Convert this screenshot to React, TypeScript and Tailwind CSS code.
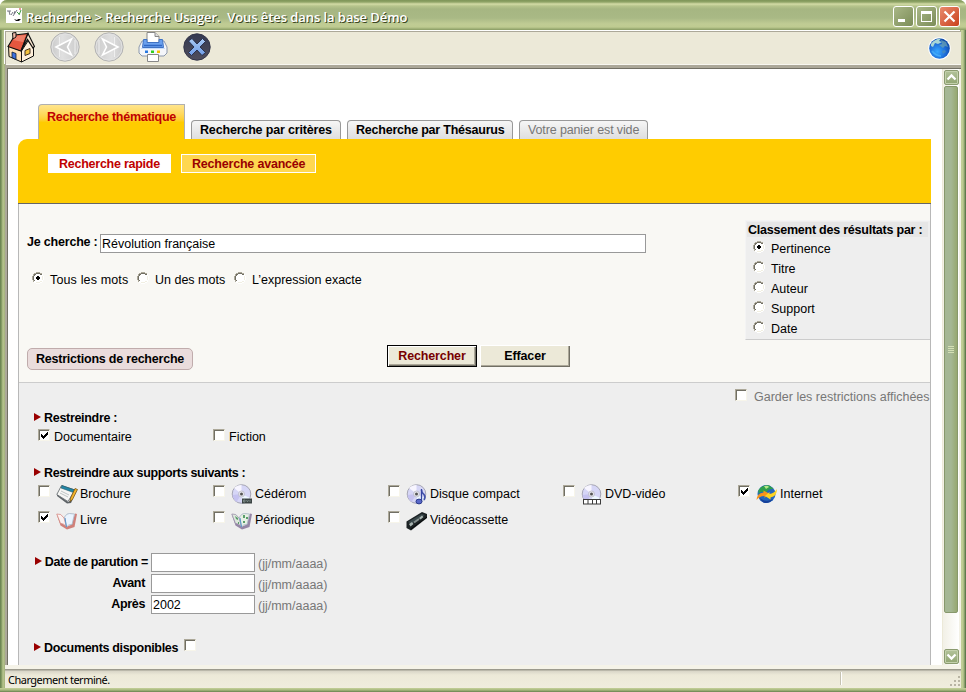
import React from "react";

const BASE = "block h-[15px] text-[12.5px] leading-[16px] whitespace-nowrap";

function Label({ className = "", children }: { className?: string; children: React.ReactNode }) {
  return <span className={`${BASE} shrink-0 ${className}`}>{children}</span>;
}

function Radio({ checked = false }: { checked?: boolean }) {
  return (
    <svg width="12" height="12" viewBox="0 0 12 12" className="block shrink-0" shapeRendering="crispEdges">
      <path d="M4 1h4v1h2v2h1v4h-1v2h-2v1H4v-1H2V8H1V4h1V2h2z" fill="#fff" />
      <path d="M4 0h4v1H4zM2 1h2v1H2zM8 1h2v1H8zM1 2h1v2H1zM0 4h1v4H0zM1 8h1v2H1z" fill="#aca899" />
      <path d="M4 1h4v1H4zM2 2h2v1H2zM8 2h2v1H8zM2 3h1v1H2zM1 4h1v4H1zM2 8h1v1H2z" fill="#716f64" />
      <path d="M4 11h4v1H4zM8 10h2v1H8zM2 10h2v1H2zM10 8h1v2h-1zM11 4h1v4h-1zM10 2h1v2h-1z" fill="#fff" />
      <path d="M4 10h4v1H4zM8 9h2v1H8zM10 4h1v4h-1z" fill="#f1efe2" />
      {checked && <path d="M5 4h2v1h1v2h-1v1h-2v-1h-1v-2h1z" fill="#000" />}
    </svg>
  );
}

function Check({ checked = false }: { checked?: boolean }) {
  return (
    <span className="block size-3 shrink-0 border border-t-[#aca899] border-r-[#f7f5ea] border-b-[#f7f5ea] border-l-[#aca899] bg-white">
      <span className="block size-[10px] border-t border-l border-[#716f64]">
        {checked && (
          <svg width="9" height="9" viewBox="0 0 9 9" className="block" shapeRendering="crispEdges">
            <path d="M1 3h1v1h1v1h1v-1h1v-1h1v-1h1v-1h1v3h-1v1h-1v1h-1v1h-1v1h-1v-1h-1v-1h-1z" fill="#000" />
          </svg>
        )}
      </span>
    </span>
  );
}

function Arrow() {
  return (
    <svg width="7" height="8" viewBox="0 0 7 8" className="block shrink-0">
      <path d="M0 0l7 4-7 4z" fill="#900" />
    </svg>
  );
}

function AppIcon() {
  return (
    <svg width="16" height="15" viewBox="0 0 16 15" className="block shrink-0">
      <path d="M0 0h16v15H0z" fill="#fff" />
      <path d="M1 3h4M3 3l1 4M5 7l2-3M7 8l4-6M9 3l-1 3" stroke="#667" fill="none" strokeWidth=".9" />
      <path d="M11 4l2 2M13 7l2-5" stroke="#3a9a40" fill="none" />
      <path d="M13 1h2" stroke="#c33" />
      <path d="M8 11l3 1 1-1h3l-2 2h-3z" fill="#111" />
    </svg>
  );
}

function House() {
  return (
    <svg width="28" height="31" viewBox="0 0 28 31" className="block shrink-0">
      <path d="M1.500 14L14.500 19V30L2 24.500z" fill="#ffe0b4" stroke="#111" />
      <path d="M14.500 19L21 9 26.500 15V24L14.500 30z" fill="#fff0da" stroke="#111" />
      <path d="M1 14.500L8 3 21 1.500 14 19z" fill="#e4573f" stroke="#111" strokeWidth="1.2" />
      <path d="M8 4L19 3 16 10 6 8z" fill="#f0806a" />
      <path d="M21 1.500L27.500 14.500 26 16 20.500 7.500 14 19z" fill="#fbe6cf" stroke="#111" strokeWidth="1.200" />
      <path d="M5.500 1L9 .5V5L6 7z" fill="#f1bca8" stroke="#111" />
      <path d="M5 20l4 1.500V27.500L5 25.500z" fill="#3f70e0" stroke="#123" strokeWidth=".8" />
      <path d="M18 18.500l5-2v5l-5 2z" fill="#f6c33c" stroke="#432" />
    </svg>
  );
}

function NavDisc({ flip = false }: { flip?: boolean }) {
  return (
    <svg width="30" height="30" viewBox="0 0 30 30" className={flip ? "block shrink-0 -scale-x-100" : "block shrink-0"}>
      <defs>
        <linearGradient id={flip ? "discB" : "discA"} x1="0" x2="1">
          <stop offset="0" stopColor="#c9c9c9" />
          <stop offset=".4" stopColor="#e0e0e0" />
          <stop offset="1" stopColor="#cbcbcb" />
        </linearGradient>
      </defs>
      <circle cx="15" cy="15" r="14.2" fill={flip ? "url(#discB)" : "url(#discA)"} stroke="#b3b3b3" />
      <circle cx="15" cy="15" r="13" fill="none" stroke="#e2e2e2" />
      <path d="M9.500 5v20M25 8v14" stroke="#efefef" />
      <path d="M21.500 7L6 15 21.500 23 17.500 15z" fill="#cfcfcf" stroke="#fff" strokeWidth="1.6" />
    </svg>
  );
}

function Printer() {
  return (
    <svg width="30" height="30" viewBox="0 0 30 30" className="block shrink-0">
      <path d="M4 9L1 15v6l3 3h22l3-3v-6l-3-6z" fill="#f4f6fa" stroke="#8c98ac" />
      <path d="M9 11V.5h8l4 4V11z" fill="#fff" stroke="#888" />
      <path d="M17 .5v4h4" fill="#ddd" stroke="#888" />
      <path d="M5.500 7.500h3.500v3h12v-3h3.500l1 8H4.500z" fill="#6aa0ee" stroke="#3f72c4" />
      <path d="M6 13.500h18" stroke="#2f66c4" strokeWidth="1.500" />
      <path d="M3 16.500h24" stroke="#c6dcfb" />
      <path d="M7 18.500h3v2.500H7z" fill="#2878e0" />
      <path d="M13 18.500h3v2.500h-3z" fill="#30d020" />
      <path d="M19 18.500h3v2.500h-3z" fill="#f5c000" />
      <path d="M9.500 22.500h11v7h-11z" fill="#fff" stroke="#888" />
    </svg>
  );
}

function CloseDisc() {
  return (
    <svg width="28" height="28" viewBox="0 0 28 28" className="block shrink-0">
      <defs>
        <linearGradient id="closeBg" x2="0" y2="1">
          <stop offset="0" stopColor="#343850" />
          <stop offset="1" stopColor="#504e5c" />
        </linearGradient>
        <linearGradient id="closeX" x2="0" y2="1">
          <stop offset="0" stopColor="#a9caf4" />
          <stop offset="1" stopColor="#6f9ce6" />
        </linearGradient>
      </defs>
      <circle cx="14" cy="14" r="13.200" fill="url(#closeBg)" stroke="#34364a" />
      <path d="M5.500 8L9 5.500l5 5.500 5.500-5.500 3 3-5.500 5.500 5.500 5.500-3.500 3-5-5.500-5.500 5.500-3-3 5.500-5.500z" fill="url(#closeX)" stroke="#222a48" strokeWidth=".9" />
    </svg>
  );
}

function Globe() {
  return (
    <svg width="23" height="23" viewBox="0 0 23 23" className="block shrink-0">
      <defs>
        <radialGradient id="globeG" cx=".4" cy=".65" r=".7">
          <stop offset="0" stopColor="#38a8ff" />
          <stop offset=".6" stopColor="#1b69d6" />
          <stop offset="1" stopColor="#0f459e" />
        </radialGradient>
      </defs>
      <circle cx="11.500" cy="11.500" r="11.200" fill="#fff" />
      <circle cx="11.500" cy="11.500" r="10.300" fill="url(#globeG)" />
      <path d="M3 7Q7 1.500 13 1.500l-2 2.500 3 1-4 2-3-1-2 4-2-1z" fill="#a7d5d6" />
      <path d="M13 3l5 2 2 5-3-1-2 2-4-3 3-1z" fill="#6fa5b0" opacity=".7" />
      <path d="M14 14l3-1 1 2-3 2z" fill="#4f8fb5" opacity=".7" />
      <path d="M4 14q4 5 9 5" stroke="#5cc8ff" fill="none" strokeWidth="2" opacity=".5" />
    </svg>
  );
}

function Disc({ kind }: { kind: "cd" | "audio" | "video" }) {
  return (
    <svg width="22" height="22" viewBox="0 0 22 22" className="block shrink-0">
      <circle cx="10.500" cy="10" r="9.300" fill="#d6d6f6" stroke="#a6a6b4" />
      <path d="M10.500 10L3 4Q6 1 10.500 1z" fill="#f7f5ff" />
      <path d="M10.500 10L19 14q-3 5-8 5z" fill="#edf7ff" />
      <path d="M10.500 10L1.500 11q1 5 4 7z" fill="#c5c2f0" />
      <circle cx="10.500" cy="10" r="3" fill="#e6e6ee" stroke="#b4b4c2" strokeWidth=".7" />
      <circle cx="10.500" cy="10" r="1.500" fill="#555" />
      {kind === "cd" && (
        <g>
          <path d="M11 14.500h10v5H11z" fill="#3c4444" />
          <path d="M12.500 16v2h1.500v-2zM15.500 16l1 2 1-2M19 16v2" stroke="#8fa09c" fill="none" strokeWidth=".7" />
        </g>
      )}
      {kind === "audio" && (
        <g>
          <path d="M15.500 6q0 3 2.500 4.500 2 2.500 0 5.500" fill="none" stroke="#4353ac" strokeWidth="1.600" />
          <path d="M15.500 5v12" stroke="#3444a0" strokeWidth="1.300" />
          <ellipse cx="13" cy="17.500" rx="3" ry="2.400" fill="#5867c8" stroke="#2c3b8d" />
        </g>
      )}
      {kind === "video" && (
        <g>
          <path d="M2 15h18v5.500H2z" fill="#3b3b3b" />
          <path d="M3 16h3.500v3.500H3zM7.500 16H11v3.500H7.500zM12 16h3v3.500h-3zM16 16h3v3.500h-3z" fill="#fff" />
        </g>
      )}
    </svg>
  );
}

function Brochure() {
  return (
    <svg width="22" height="22" viewBox="0 0 22 22" className="block shrink-0">
      <path d="M1 9.500L12 18l5-3-2 4-4 .5L1 12z" fill="#5d6266" />
      <path d="M5.500 1.500L19 6 12 17.500.8 10.500z" fill="#f6f6f4" stroke="#6b7276" strokeWidth=".9" />
      <path d="M6 1.500L19 6l-1.500 2.500L5 4z" fill="#2387a8" stroke="#205565" strokeWidth=".6" />
      <path d="M5 7l8 4M4 9l8 4" stroke="#b0b6b8" strokeWidth=".8" />
      <path d="M19 4.500l2.500 1-5 10-2.500 2 .5-3.500z" fill="#f4b42c" stroke="#65470f" strokeWidth=".7" />
    </svg>
  );
}

function Book({ periodical = false }: { periodical?: boolean }) {
  const edge = periodical ? "#9586a6" : "#d0807a";
  return (
    <svg width="22" height="22" viewBox="0 0 22 22" className="block shrink-0">
      <path d="M.5 4l4 11.500L11 19.500l7.500-2.500L21 4l-2-.5-3 11-5 2-5-3z" fill={edge} />
      <path d="M.8 4Q5 3 8 8l2.500 9Q8 13 4.500 13.500z" fill={periodical ? "#dde8dc" : "#fbf1f0"} stroke={edge} strokeWidth=".7" />
      <path d="M10.500 17L8.500 7Q11 3 13.500 3.500L18.500 4 16 14.500q-3.500-.5-5.500 2.500z" fill={periodical ? "#e7f0e4" : "#eaf4ff"} stroke="#9cabbc" strokeWidth=".7" />
      <path d="M9 8l1.500 9" stroke="#5a95cc" />
      {periodical && <path d="M4 6l3 2v2l-2-1zM12 5h2v3h-2zM15 7h2v2h-2zM12 11h2v2h-2zM7 12h1v2H7z" fill="#5a9e6a" />}
    </svg>
  );
}

function Cassette() {
  return (
    <svg width="22" height="22" viewBox="0 0 22 22" className="block shrink-0">
      <path d="M.5 11.500L16 2l5 2v4L5 20.500.5 18z" fill="#1c2224" />
      <path d="M2 12L15.500 4l3.500 1L5.500 14z" fill="#39474a" />
      <path d="M3 14l3-2 1.500 2-3 2.500zM13 8l3-2.500L17.500 7l-3 2.500z" fill="#a9b5b2" />
      <path d="M8 12.500l5-3.500" stroke="#86908f" strokeWidth="2" />
      <path d="M5 19L21 7" stroke="#080a0b" />
    </svg>
  );
}

function WebBall() {
  return (
    <svg width="22" height="22" viewBox="0 0 22 22" className="block shrink-0">
      <circle cx="10.500" cy="10" r="9" fill="#2466bc" />
      <path d="M2.500 6Q6 .8 13 1.300l4.500 3.500-5 1-3 3-4-1-3 2z" fill="#2f9f4c" />
      <path d="M8 2q4-1 5 1l-3 2z" fill="#b4e884" />
      <path d="M4 14q6 5 13 1-3 4.500-8 4-4-1-5-5z" fill="#16409a" />
      <path d="M.5 16Q1 9 7.500 8.500V6.500L13 9.500 8.500 14v-2Q4 12 .5 16z" fill="#f8941b" />
      <path d="M21 5q0 7.500-6.500 8.500v2L9 12l4.500-4v2Q18 9.500 21 5z" fill="#fdd321" />
    </svg>
  );
}

function WinButton({ kind }: { kind: "min" | "max" | "close" }) {
  const bg = kind === "close" ? "bg-linear-to-br from-[#e88a6c] to-[#c93f18]" : "bg-linear-to-br from-[#a9b787] to-[#7c8d58]";
  return (
    <span className={`block size-[21px] shrink-0 rounded-[3px] border border-white ${bg}`}>
      <svg width="19" height="19" viewBox="0 0 19 19" className="block">
        {kind === "min" && <path d="M4 12h7v3H4z" fill="#fff" />}
        {kind === "max" && <path d="M4 4h11v11H4zM5 7v7h9V7z" fill="#fff" fillRule="evenodd" />}
        {kind === "close" && <path d="M4.500 4.500l10 10M14.500 4.500l-10 10" stroke="#fff" strokeWidth="2.200" />}
      </svg>
    </span>
  );
}

function ScrollButton({ down = false }: { down?: boolean }) {
  return (
    <span className="block h-[15px] w-[15px] shrink-0 rounded-[2px] border border-[#8b9b70] bg-linear-to-b from-[#b3c39a] to-[#91a572] shadow-[inset_0_0_0_1px_#c4d1ad]">
      <svg width="13" height="13" viewBox="0 0 13 13" className={down ? "block rotate-180" : "block"}>
        <path d="M2.500 8.500l4-4 4 4" fill="none" stroke="#fff" strokeWidth="2.300" />
      </svg>
    </span>
  );
}

function Tab({ className, children }: { className: string; children: React.ReactNode }) {
  return (
    <div className={`h-[19px] shrink-0 rounded-t-[4px] border border-b-0 border-[#999] bg-linear-to-b from-[#f6f6f6] to-[#dedede] pt-px pl-2 ${className}`}>
      {children}
    </div>
  );
}

function Item({ checked = false, icon, label }: { checked?: boolean; icon?: React.ReactNode; label: string }) {
  return (
    <div className="flex w-[175px] shrink-0 items-start">
      <Check checked={checked} />
      {icon ? <span className="-mt-px ml-1.5 h-[22px] w-6 shrink-0">{icon}</span> : <span className="w-1 shrink-0" />}
      <Label className={icon ? "mt-px" : ""}>{label}</Label>
    </div>
  );
}

function DateRow({ label, value = "", arrow = false }: { label: string; value?: string; arrow?: boolean }) {
  return (
    <div className="mb-0.5 flex h-[19px] items-start">
      <div className={`mt-px flex w-[132px] items-start justify-end ${arrow ? "pr-[3px]" : "pr-1.5"}`}>
        {arrow && <span className="mt-[3px] mr-[3px]"><Arrow /></span>}
        <Label className="font-bold tracking-[-0.34px]">{label}</Label>
      </div>
      <div className="h-[19px] w-[104px] border border-[#999] bg-white pt-px pl-px"><Label>{value}</Label></div>
      <Label className="mt-[3px] ml-[3px] text-[#777]">(jj/mm/aaaa)</Label>
    </div>
  );
}

function Toolbar() {
  return (
    <div className="flex h-[34px] shrink-0 items-start border-t border-l border-[#aca899] bg-[#ece9d8] shadow-[-1px_-1px_0_#fff,inset_0_-1px_0_#f8f7f0]">
      <span className="ml-px"><House /></span>
      <span className="ml-[15px]"><NavDisc /></span>
      <span className="ml-3.5"><NavDisc flip /></span>
      <span className="ml-3.5"><Printer /></span>
      <span className="mt-px ml-[15px]"><CloseDisc /></span>
      <span className="mt-[5px] mr-[10px] ml-auto"><Globe /></span>
    </div>
  );
}

function SearchPanel() {
  return (
    <div className="flex h-[179px] shrink-0 justify-between border-b border-[#ccc] bg-[#f9f8f4]">
      <div className="pt-[30px] pl-2">
        <div className="flex items-start">
          <Label className="w-[73px] font-bold tracking-[-0.2px]">Je cherche :</Label>
          <div className="h-[19px] w-[546px] border border-[#999] bg-white pt-px pl-px"><Label>Révolution française</Label></div>
        </div>
        <div className="mt-[19px] flex items-start pl-[5px]">
          <Radio checked /><Label className="ml-1.5 w-[87px] tracking-[0.15px]">Tous les mots</Label>
          <Radio /><Label className="ml-1.5 w-[79px]">Un des mots</Label>
          <Radio /><Label className="ml-1.5">L’expression exacte</Label>
        </div>
        <div className="mt-[58px] flex items-start">
          <div className="mt-[3px] h-[22px] w-[166px] rounded-[5px] border border-[#c0acac] bg-[#eadcdc] pt-0.5 pl-2">
            <Label className="font-bold tracking-[-0.22px]">Restrictions de recherche</Label>
          </div>
          <div className="ml-[194px] flex h-[22px] w-[90px] justify-center border border-black bg-[#ece9d8] pt-0.5 font-bold text-[#700] shadow-[inset_1px_1px_0_#fff,inset_-1px_-1px_0_#716f64,inset_-2px_-2px_0_#aca899]">
            <Label className="tracking-[-0.15px]">Rechercher</Label>
          </div>
          <div className="ml-[3px] flex h-[22px] w-[90px] justify-center bg-[#ece9d8] pt-[3px] font-bold shadow-[inset_1px_1px_0_#fff,inset_-1px_-1px_0_#716f64,inset_-2px_-2px_0_#aca899]">
            <Label className="tracking-[-0.15px]">Effacer</Label>
          </div>
        </div>
      </div>
      <div className="mt-4 h-[120px] w-[185px] border-t border-b border-l border-t-[#f4f4f4] border-b-[#ccc] border-l-[#f4f4f4] bg-[#eee] pt-px pl-px">
        <div className="h-[15px] w-[181px] bg-[#e6e6e6] pl-px"><Label className="font-bold tracking-[-0.23px]">Classement des résultats par :</Label></div>
        <div className="flex flex-col gap-[5px] pt-1 pl-1.5">
          {["Pertinence", "Titre", "Auteur", "Support", "Date"].map((t, i) => (
            <div key={t} className="flex h-[15px] items-start">
              <Radio checked={i === 0} /><Label className="ml-1.5">{t}</Label>
            </div>
          ))}
        </div>
      </div>
    </div>
  );
}

function RestrictionsPanel() {
  return (
    <div className="min-h-0 flex-1 overflow-hidden bg-[#eee] pt-1.5 pl-[15px]">
      <div className="flex items-start justify-end pr-0.5">
        <Check /><Label className="ml-[7px] w-[174px] text-[#777]">Garder les restrictions affichées</Label>
      </div>
      <div className="mt-1.5 flex items-start gap-[3px]"><span className="mt-[3px]"><Arrow /></span><Label className="font-bold tracking-[-0.3px]">Restreindre :</Label></div>
      <div className="mt-1 flex pl-1"><Item checked label="Documentaire" /><Item label="Fiction" /></div>
      <div className="mt-[21px] flex items-start gap-[3px]"><span className="mt-[3px]"><Arrow /></span><Label className="font-bold tracking-[-0.34px]">Restreindre aux supports suivants :</Label></div>
      <div className="mt-[5px] flex h-[26px] pl-1">
        <Item icon={<Brochure />} label="Brochure" />
        <Item icon={<Disc kind="cd" />} label="Cédérom" />
        <Item icon={<Disc kind="audio" />} label="Disque compact" />
        <Item icon={<Disc kind="video" />} label="DVD-vidéo" />
        <Item checked icon={<WebBall />} label="Internet" />
      </div>
      <div className="flex h-[26px] pl-1">
        <Item checked icon={<Book />} label="Livre" />
        <Item icon={<Book periodical />} label="Périodique" />
        <Item icon={<Cassette />} label="Vidéocassette" />
      </div>
      <div className="mt-4 -ml-[15px]">
        <DateRow label="Date de parution =" arrow />
        <DateRow label="Avant" />
        <DateRow label="Après" value="2002" />
      </div>
      <div className="mt-[25px] flex items-start"><span className="mt-1"><Arrow /></span><Label className="mt-px ml-[3px] w-[140px] font-bold tracking-[-0.33px]">Documents disponibles</Label><Check /></div>
    </div>
  );
}

function Page() {
  return (
    <div className="flex min-w-0 flex-1 flex-col bg-white pt-[35px] pr-[11px] pl-2.5">
      <div className="flex h-[35px] shrink-0 items-end gap-1.5 pl-5">
        <div className="h-[35px] w-[147px] rounded-tl-[4px] border border-b-0 border-[#b0b0b0] bg-linear-to-b from-[#ffe58c] to-[#fc0] to-50% pt-1 pl-2">
          <Label className="font-bold tracking-[-0.25px] text-[#c00000]">Recherche thématique</Label>
        </div>
        <Tab className="w-[150px]"><Label className="font-bold tracking-[-0.17px]">Recherche par critères</Label></Tab>
        <Tab className="w-[166px]"><Label className="font-bold tracking-[-0.22px]">Recherche par Thésaurus</Label></Tab>
        <Tab className="w-[129px]"><Label className="tracking-[-0.13px] text-[#777]">Votre panier est vide</Label></Tab>
      </div>
      <div className="flex h-[65px] shrink-0 items-start gap-2.5 rounded-tl-[9px] border-b border-[#666] bg-[#fc0] pt-[15px] pl-[30px] font-bold">
        <div className="h-[19px] w-[123px] bg-white pt-0.5 pl-[11px] text-[#c00000]"><Label className="tracking-[-0.25px]">Recherche rapide</Label></div>
        <div className="h-[19px] w-[135px] border border-white bg-[#ffd750] pt-px pl-2.5 text-[#900]"><Label className="tracking-[-0.2px]">Recherche avancée</Label></div>
      </div>
      <div className="flex min-h-0 flex-1 flex-col border-x border-[#b8b8b8]">
        <SearchPanel />
        <RestrictionsPanel />
      </div>
    </div>
  );
}

function Scrollbar() {
  return (
    <div className="flex w-[17px] shrink-0 flex-col items-center border-l border-[#ece9d8] bg-linear-to-r from-[#f2f0e6] to-white">
      <div className="pt-px"><ScrollButton /></div>
      <div className="mt-px flex h-[527px] w-[14px] flex-col items-center justify-center gap-px rounded-[2px] border border-[#87986c] bg-linear-to-r from-[#a5b794] from-50% to-[#97a870]">
        <span className="block h-px w-1.5 bg-[#d4e0b4]" />
        <span className="block h-px w-1.5 bg-[#d4e0b4]" />
        <span className="block h-px w-1.5 bg-[#d4e0b4]" />
        <span className="block h-px w-1.5 bg-[#d4e0b4]" />
      </div>
      <div className="mt-auto pb-px"><ScrollButton down /></div>
    </div>
  );
}

export default function App() {
  return (
    <div className="flex h-[692px] w-[966px] flex-col overflow-hidden rounded-t-[7px] bg-[#a4b878] font-['Liberation_Sans',Arial,sans-serif] text-black">
      <header className="flex h-[30px] shrink-0 items-start bg-[linear-gradient(#7d9458_0px,#8fa467_2px,#d3dba6_4px,#b6c48c_6px,#a6b682_9px,#a9b985_18px,#c0cc94_24px,#becb91_27px,#889b63_30px)] pl-1.5">
        <span className="mt-2"><AppIcon /></span>
        <h1 className="mt-2 ml-1 h-[18px] font-['Open_Sans',sans-serif] text-[13px] leading-[18px] font-semibold tracking-[-0.07px] whitespace-pre text-white [text-shadow:1px_1px_0_#3c4722]">{"Recherche > Recherche Usager.  Vous êtes dans la base Démo"}</h1>
        <div className="mt-1.5 mr-1.5 ml-auto flex gap-0.5"><WinButton kind="min" /><WinButton kind="max" /><WinButton kind="close" /></div>
      </header>
      <div className="flex min-h-0 flex-1">
        <div className="w-[5px] shrink-0 bg-[linear-gradient(90deg,#647e4e_0px,#77905a_1px,#94a871_2px,#b9c68f_3px,#a3b17c_5px)]" />
        <div className="flex min-w-0 flex-1 flex-col pt-px">
          <Toolbar />
          <div className="flex min-h-0 flex-1 border-t-[3px] border-l-2 border-[#aca899]">
            <div className="flex min-w-0 flex-1 border-t border-l border-[#716f64]">
              <Page />
              <Scrollbar />
              <div className="w-0.5 shrink-0 bg-[#f3f1e5]" />
            </div>
          </div>
          <footer className="flex h-[23px] shrink-0 items-start border-t-[4px] border-[#f5f3e8] bg-[linear-gradient(#9c9a8d_0px,#9c9a8d_1px,#d8d5c7_2px,#ece9d8_6px,#f0edde_20px)] pl-[3px]">
            <span className="mt-[3px] font-['Noto_Sans',sans-serif] text-[11px] leading-[15px] tracking-[-0.5px] whitespace-nowrap">Chargement terminé.</span>
            <span className="mt-[3px] ml-auto h-[13px] w-0.5 border-l border-[#c5c2b2] bg-white" />
            <svg width="11" height="11" viewBox="0 0 11 11" className="mt-[7px] ml-[108px] block" shapeRendering="crispEdges">
              <path d="M8 0h2v2H8zM4 4h2v2H4zM8 4h2v2H8zM0 8h2v2H0zM4 8h2v2H4zM8 8h2v2H8z" fill="#b8b4a3" />
            </svg>
          </footer>
        </div>
        <div className="w-[5px] shrink-0 bg-[linear-gradient(90deg,#bcc894_0px,#c7d39b_1px,#a3b57d_3px,#6f885a_4px,#526c42_5px)]" />
      </div>
      <div className="h-1 shrink-0 bg-[linear-gradient(#c5d09a_0px,#a9ba80_2px,#66804f_4px)]" />
    </div>
  );
}
